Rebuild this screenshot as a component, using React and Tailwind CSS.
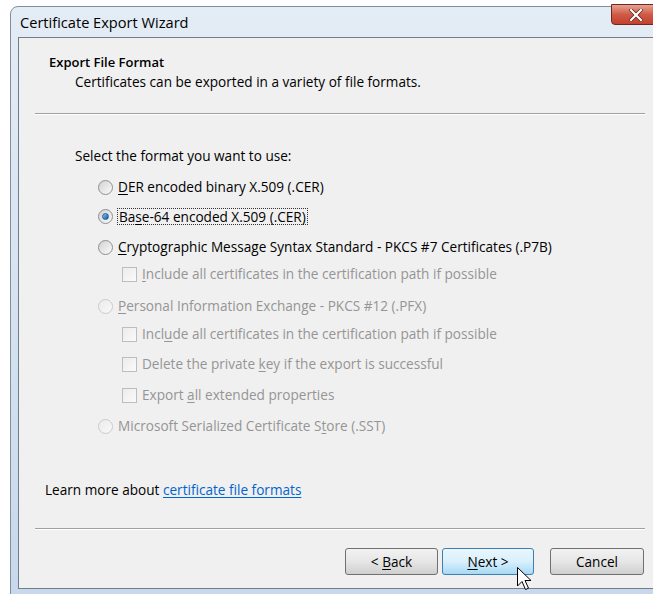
import React from "react";

const formats = [
  { type: "radio", pre: "", key: "D", post: "ER encoded binary X.509 (.CER)", gap: "mt-[13px]" },
  { type: "radio", pre: "Ba", key: "s", post: "e-64 encoded X.509 (.CER)", gap: "mt-[11px]", checked: true, focus: true },
  { type: "radio", pre: "", key: "C", post: "ryptographic Message Syntax Standard - PKCS #7 Certificates (.P7B)", gap: "mt-[13px]" },
  { type: "check", pre: "", key: "I", post: "nclude all certificates in the certification path if possible", gap: "mt-[9px]", disabled: true },
  { type: "radio", pre: "", key: "P", post: "ersonal Information Exchange - PKCS #12 (.PFX)", gap: "mt-[14px]", disabled: true },
  { type: "check", pre: "Incl", key: "u", post: "de all certificates in the certification path if possible", gap: "mt-[10px]", disabled: true },
  { type: "check", pre: "Delete the private ", key: "k", post: "ey if the export is successful", gap: "mt-[12px]", disabled: true },
  { type: "check", pre: "Export ", key: "a", post: "ll extended properties", gap: "mt-[13px]", disabled: true },
  { type: "radio", pre: "Microsoft Serialized Certificate S", key: "t", post: "ore (.SST)", gap: "mt-[13px]", disabled: true },
];

function Radio({ checked, disabled }) {
  return (
    <span
      className={
        "w-[15px] h-[15px] rounded-full border flex items-center justify-center shrink-0 " +
        (disabled
          ? "border-[#cacaca] bg-linear-to-br from-[#ebebeb] to-[#f9f9f9]"
          : "border-[#8f8f8f] bg-linear-to-br from-[#d2d2d2] to-[#fbfbfb]")
      }
    >
      {checked && (
        <span className="w-[7px] h-[7px] rounded-full border border-[#1d5fa3] bg-linear-to-br from-[#8cc6f5] to-[#0c52a6]" />
      )}
    </span>
  );
}

function Check() {
  return (
    <span className="w-[15px] h-[15px] border border-[#bdbdbd] bg-linear-to-br from-[#ececec] to-[#fafafa] shrink-0" />
  );
}

function Option({ item }) {
  const text = (
    <>
      {item.pre}
      <span className="underline underline-offset-2">{item.key}</span>
      {item.post}
    </>
  );
  return (
    <div
      className={
        "flex items-center h-[18px] gap-[4px] " +
        item.gap +
        (item.type === "radio" ? " pl-[79px]" : " pl-[103px]") +
        (item.disabled ? " text-[#959595]" : " text-black")
      }
    >
      {item.type === "radio" ? <Radio checked={item.checked} disabled={item.disabled} /> : <Check />}
      {item.focus ? (
        <span className="border border-dotted border-[#333] px-[1px] leading-[15px]">{text}</span>
      ) : (
        <span className="pl-[1px]">{text}</span>
      )}
    </div>
  );
}

function Button({ children, hot, width }) {
  return (
    <button
      className={
        "h-[27px] rounded-[3px] border flex items-center justify-center text-black " +
        width +
        (hot
          ? " border-[#3c7fb1] bg-linear-to-b from-[#eaf6fd] via-[#d9f0fc] to-[#a7d9f5]"
          : " border-[#707070] bg-linear-to-b from-[#f2f2f2] via-[#e6e6e6] to-[#cfcfcf]")
      }
    >
      <span className="px-2">{children}</span>
    </button>
  );
}

export default function App() {
  return (
    <div className="w-[653px] h-[594px] bg-white overflow-hidden pt-[6px] pl-[10px] relative font-['Open_Sans',sans-serif] text-[13.6px] leading-[18px]">
      <div className="w-[662px] h-[600px] rounded-tl-[8px] border border-[#7e8fa2] bg-linear-to-b from-[#e4ecf5] to-[#c8d8ea]">
        {/* title bar */}
        <div className="h-[30px] flex items-center">
          <span className="pl-[9px] text-[14.6px] text-black">Certificate Export Wizard</span>
          <div className="ml-auto mr-[10px] self-start -mt-[3px] w-[50px] h-[21px] rounded-b-[4px] border border-[#6e2a22] bg-linear-to-b from-[#e6a190] via-[#cf5a46] to-[#c2412d] flex items-center justify-center">
            <svg width="14" height="12" viewBox="0 0 14 12">
              <path d="M2 1 L12 11 M12 1 L2 11" stroke="#5a1e16" strokeWidth="3.6" strokeLinecap="square" />
              <path d="M2 1 L12 11 M12 1 L2 11" stroke="#fff" strokeWidth="2.2" strokeLinecap="square" />
            </svg>
          </div>
        </div>

        {/* client area */}
        <div className="ml-[7px] w-[650px] h-[552px] border border-[#6f7d8c] bg-[#f0f0f0] flex flex-col">
          <div className="pt-[15px] pl-[30px] font-semibold text-[13px] text-black">Export File Format</div>
          <div className="mt-[2px] pl-[56px] text-black">Certificates can be exported in a variety of file formats.</div>
          <div className="mt-[22px] ml-[16px] w-[610px] border-t border-b border-t-[#a0a0a0] border-b-white" />

          <div className="mt-[32px] pl-[56px] text-black">Select the format you want to use:</div>
          {formats.map((item, i) => (
            <Option key={i} item={item} />
          ))}

          <div className="mt-[46px] pl-[26px] text-black">
            Learn more about{" "}
            <span className="text-[#0066cc] underline underline-offset-2">certificate file formats</span>
          </div>

          <div className="mt-[29px] ml-[16px] w-[610px] border-t border-b border-t-[#a0a0a0] border-b-white" />

          <div className="mt-[18px] ml-[326px] flex">
            <Button width="w-[93px]">
              &lt; <span className="underline underline-offset-2">B</span>ack
            </Button>
            <div className="ml-[4px]">
              <Button width="w-[92px]" hot>
                <span className="underline underline-offset-2">N</span>ext &gt;
              </Button>
            </div>
            <div className="ml-[16px]">
              <Button width="w-[94px]">Cancel</Button>
            </div>
          </div>
        </div>
      </div>

      {/* mouse pointer over Next */}
      <svg className="absolute left-[517px] top-[567px]" width="16" height="25" viewBox="0 0 16 25">
        <path
          d="M0.5 0.5 L0.5 19 L5 14.5 L8.5 22.5 L11.5 21.2 L8 13.5 L14 13.5 Z"
          fill="#fff"
          stroke="#000"
          strokeWidth="1"
          strokeLinejoin="miter"
        />
      </svg>
    </div>
  );
}
